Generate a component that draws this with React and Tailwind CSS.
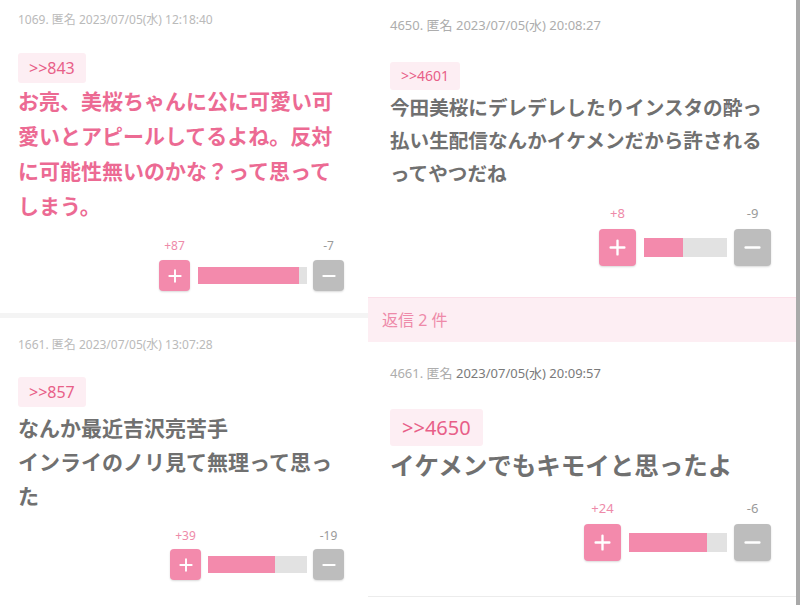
import React from 'react';

const FONT = { fontFamily: '"Noto Sans", "Noto Sans CJK JP", sans-serif' };

function PlusIcon({ size }) {
  return (
    <svg width={size} height={size} viewBox="0 0 16 16">
      <path d="M8 1.5v13M1.5 8h13" stroke="white" strokeWidth="2.2" strokeLinecap="round" />
    </svg>
  );
}

function MinusIcon({ size }) {
  return (
    <svg width={size} height={size} viewBox="0 0 16 16">
      <path d="M1.5 8h13" stroke="white" strokeWidth="2.2" strokeLinecap="round" />
    </svg>
  );
}

function Vote({ plus, minus, btn, barW, barH, icon, labelClass, gapL, gapR }) {
  const total = plus + minus;
  const pct = (plus / total) * 100;
  return (
    <div className="flex justify-end">
      <div className="flex flex-col">
        <div className="flex justify-between">
          <span className={`text-center text-[#ee8aa9] ${labelClass}`} style={{ width: btn }}>+{plus}</span>
          <span className={`text-center text-[#9a9a9a] ${labelClass}`} style={{ width: btn }}>-{minus}</span>
        </div>
        <div className="flex items-center">
          <button
            className="flex items-center justify-center rounded-[4px] bg-[#f38aac] shadow-[0_1px_2px_rgba(0,0,0,0.15)]"
            style={{ width: btn, height: btn }}
          >
            <PlusIcon size={icon} />
          </button>
          <div className="bg-[#e2e2e2]" style={{ width: barW, height: barH, marginLeft: gapL, marginRight: gapR }}>
            <div className="h-full bg-[#f38aac]" style={{ width: `${pct}%` }} />
          </div>
          <button
            className="flex items-center justify-center rounded-[4px] bg-[#bdbdbd] shadow-[0_1px_2px_rgba(0,0,0,0.15)]"
            style={{ width: btn, height: btn }}
          >
            <MinusIcon size={icon} />
          </button>
        </div>
      </div>
    </div>
  );
}

export default function App() {
  return (
    <div className="flex h-[605px] w-[800px] overflow-hidden bg-white" style={FONT}>
      {/* 左カラム */}
      <div className="flex w-[368px] flex-col">
        <div className="h-[313px] px-[18px] pr-[24px] pt-[12px]">
          <p className="text-[12px] leading-[16px] text-[#bababa]">1069. 匿名 2023/07/05(水) 12:18:40</p>
          <div className="mt-[25px] inline-block h-[30px] rounded-[3px] bg-[#fdeef3] px-[11px] text-[16px] leading-[30px] text-[#e85f88]">
            &gt;&gt;843
          </div>
          <p className="mt-[1px] text-[21px] font-bold leading-[35px] text-[#ec6a93]">
            お亮、美桜ちゃんに公に可愛い可愛いとアピールしてるよね。反対に可能性無いのかな？って思ってしまう。
          </p>
          <div className="mt-[14px]">
            <Vote plus={87} minus={7} btn={31} barW={109} barH={17} icon={14} labelClass="text-[12px] leading-[16px] mb-[6px]" gapL={8} gapR={6} />
          </div>
        </div>
        <div className="h-[5px] bg-[#f4f4f4]" />
        <div className="flex-1 px-[18px] pr-[24px] pt-[19px]">
          <p className="text-[12px] leading-[16px] text-[#bababa]">1661. 匿名 2023/07/05(水) 13:07:28</p>
          <div className="mt-[24px] inline-block h-[30px] rounded-[3px] bg-[#fdeef3] px-[11px] text-[16px] leading-[30px] text-[#e85f88]">
            &gt;&gt;857
          </div>
          <p className="mt-[4px] text-[21px] font-bold leading-[34px] text-[#707070]">
            なんか最近吉沢亮苦手
            <br />
            インライのノリ見て無理って思った
          </p>
          <div className="mt-[15px]">
            <Vote plus={39} minus={19} btn={31} barW={99} barH={17} icon={14} labelClass="text-[12px] leading-[16px] mb-[5px]" gapL={7} gapR={6} />
          </div>
        </div>
      </div>

      {/* 右カラム */}
      <div className="flex flex-1 flex-col border-r-[4px] border-[#a9a9a9]">
        <div className="h-[298px] border-b border-[#fbe0e9] pl-[22px] pr-[25px] pt-[16px]">
          <p className="text-[13px] leading-[18px] text-[#adadad]">4650. 匿名 2023/07/05(水) 20:08:27</p>
          <div className="mt-[28px] inline-block h-[28px] rounded-[3px] bg-[#fdeef3] px-[11px] text-[14px] leading-[28px] text-[#e85f88]">
            &gt;&gt;4601
          </div>
          <p className="mt-[1px] text-[19.6px] font-bold leading-[33px] text-[#707070]">
            今田美桜にデレデレしたりインスタの酔っ払い生配信なんかイケメンだから許されるってやつだね
          </p>
          <div className="mt-[14px]">
            <Vote plus={8} minus={9} btn={37} barW={83} barH={19} icon={17} labelClass="text-[13px] leading-[18px] mb-[7px]" gapL={8} gapR={7} />
          </div>
        </div>
        <div className="flex h-[44px] items-center bg-[#fdeef3] pl-[14px] text-[16px] text-[#ee8aa9]">返信 2 件</div>
        <div className="h-[255px] border-b border-[#ececec] pl-[22px] pr-[25px] pt-[22px]">
          <p className="text-[13px] leading-[18px] text-[#adadad]">
            4661. 匿名 <span className="text-[#7a7a7a]">2023/07/05(水) 20:09:57</span>
          </p>
          <div className="mt-[27px] inline-block h-[37px] rounded-[3px] bg-[#fdeef3] px-[12px] text-[20px] leading-[37px] text-[#e85f88]">
            &gt;&gt;4650
          </div>
          <p className="mt-[1px] text-[24.5px] font-bold leading-[38px] text-[#707070]">イケメンでもキモイと思ったよ</p>
          <div className="mt-[14px]">
            <Vote plus={24} minus={6} btn={37} barW={98} barH={19} icon={17} labelClass="text-[13px] leading-[18px] mb-[7px]" gapL={8} gapR={7} />
          </div>
        </div>
      </div>
    </div>
  );
}
